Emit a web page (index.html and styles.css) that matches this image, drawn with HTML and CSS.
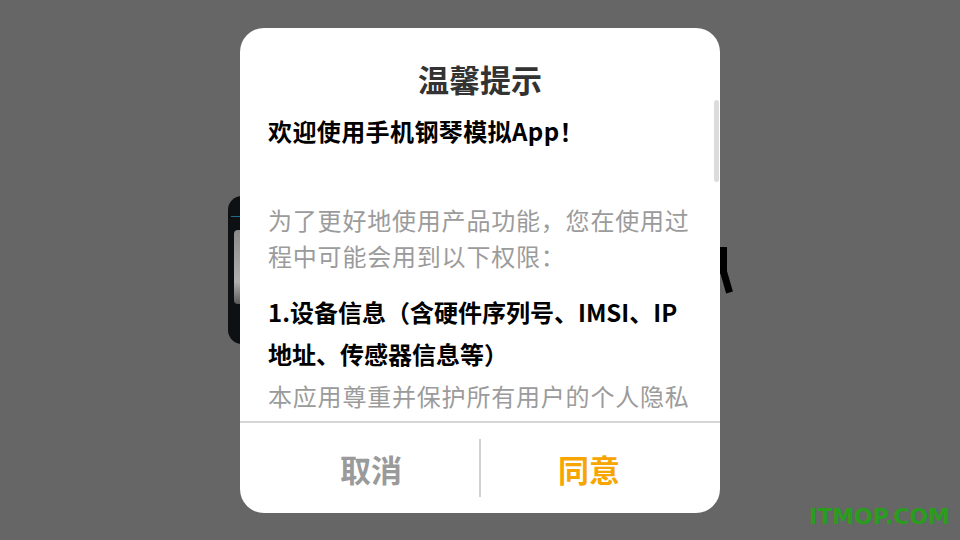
FILE: index.html
```html
<!DOCTYPE html>
<html lang="zh-CN">

<head>
    <meta charset="UTF-8">
    <meta name="viewport" content="width=device-width, initial-scale=1.0">
    <title>温馨提示</title>
    <link rel="stylesheet" href="styles.css">
</head>

<body>
    <div class="screen">
        <!-- 弹窗后面的页面残影 -->
        <div class="behind-card">
            <span class="behind-line"></span>
            <span class="behind-bar"></span>
        </div>
        <div class="behind-letter">
            <span class="stem"></span>
            <span class="leg"></span>
        </div>

        <div class="dialog">
            <h3 class="title">温馨提示</h3>
            <div class="content">
                <p class="lead">欢迎使用手机钢琴模拟App！</p>
                <p class="tip">为了更好地使用产品功能，您在使用过程中可能会用到以下权限：</p>
                <p class="item">1.设备信息（含硬件序列号、IMSI、IP地址、传感器信息等）</p>
                <p class="tip">本应用尊重并保护所有用户的个人隐私权，为了给您提供更准确、更有个性化的服务。</p>
                <span class="scrollbar"></span>
            </div>
            <div class="actions">
                <button class="cancel">取消</button>
                <span class="split"></span>
                <button class="agree">同意</button>
            </div>
        </div>

        <div class="mark">ITMOP.COM</div>
    </div>
</body>

</html>
```

FILE: styles.css
```css
* {
    padding: 0;
    margin: 0;
    box-sizing: border-box;
}

body {
    background-color: #666666;
    font-family: "Noto Sans CJK SC", "Noto Sans", sans-serif;
    overflow: hidden;
}

.screen {
    width: 960px;
    height: 540px;
    position: relative;
    display: flex;
    justify-content: center;
    padding-top: 28px;
}

/* 背景 */

.behind-card {
    position: absolute;
    left: 228px;
    top: 196px;
    width: 60px;
    height: 148px;
    background-color: #0e1113;
    border-radius: 14px;
}

.behind-line {
    position: absolute;
    left: 3px;
    top: 20px;
    width: 30px;
    height: 1px;
    background-color: #1f6f8c;
}

.behind-bar {
    position: absolute;
    left: 6px;
    top: 34px;
    width: 30px;
    height: 74px;
    border-radius: 4px;
    background: linear-gradient(#8a8a8a, #b0b0b0 70%, #5a5a5a);
}

.behind-letter {
    position: absolute;
    left: 712px;
    top: 247px;
    width: 30px;
    height: 50px;
}

.behind-letter .stem {
    position: absolute;
    left: 8px;
    top: 0;
    width: 7px;
    height: 27px;
    background-color: #000;
}

.behind-letter .leg {
    position: absolute;
    left: 11px;
    top: 24px;
    width: 7px;
    height: 22px;
    background-color: #000;
    transform: rotate(-16deg);
}

/* 弹窗 */

.dialog {
    width: 480px;
    height: 485px;
    background-color: #fff;
    border-radius: 24px;
    display: flex;
    flex-direction: column;
    position: relative;
    overflow: hidden;
}

.title {
    height: 72px;
    padding-top: 30px;
    line-height: 42px;
    font-size: 31px;
    font-weight: bold;
    color: #333;
    text-align: center;
}

.content {
    flex: 1;
    position: relative;
    overflow: hidden;
    padding: 0 26px 0 28px;
    font-size: 24px;
}

.lead {
    margin-top: 11px;
    line-height: 40px;
    font-weight: bold;
    color: #000;
    letter-spacing: 0.4px;
}

.tip {
    line-height: 36px;
    color: #9b9b9b;
    letter-spacing: 0.8px;
}

.lead + .tip {
    margin-top: 51px;
}

.item {
    margin-top: 17px;
    margin-bottom: 3px;
    line-height: 42px;
    font-weight: bold;
    color: #000;
}

.scrollbar {
    position: absolute;
    right: 1px;
    top: 0;
    width: 5px;
    height: 82px;
    border-radius: 3px;
    background-color: #dcdcdc;
}

.actions {
    height: 92px;
    border-top: 2px solid #d6d6d6;
    display: flex;
    align-items: center;
    padding: 0 23px;
}

.actions button {
    flex: 1;
    height: 88px;
    border: none;
    background: none;
    font-family: inherit;
    font-size: 31px;
    font-weight: bold;
}

.cancel {
    color: #9a9a9a;
}

.agree {
    color: #f7a500;
}

.split {
    width: 2px;
    height: 58px;
    background-color: #d2d2d2;
}

/* 水印 */

.mark {
    position: absolute;
    right: 10px;
    bottom: 11px;
    font-family: "DejaVu Sans", sans-serif;
    font-size: 22px;
    font-weight: bold;
    color: #2a9c1e;
}
```
